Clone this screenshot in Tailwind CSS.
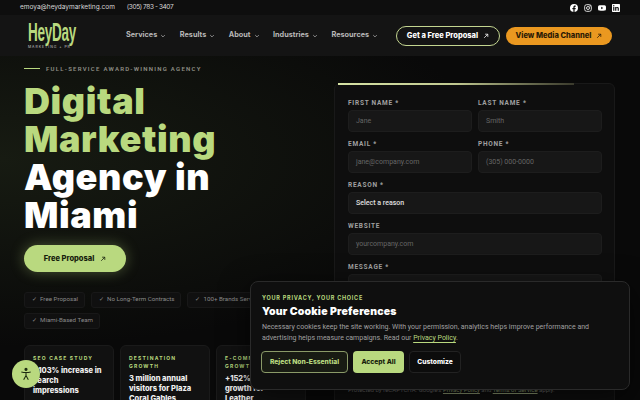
<!doctype html>
<html><head><meta charset="utf-8"><script src="https://cdn.jsdelivr.net/npm/@tailwindcss/browser@4"></script></head>
<body class="w-[640px] h-[400px] overflow-hidden bg-[#0a0a0a] font-['Inter',sans-serif] relative">
<div class="h-[15px] bg-[#0e0e0e] flex items-center justify-between pl-[20px] pr-[20px] pt-[1px] text-[6.500px] text-[#d8d8d8]">
 <div class="flex gap-[12px]"><span>emoya@heydaymarketing.com</span><span class="tracking-[-.4px]">(305) 783 - 3407</span></div>
 <div class="flex items-center gap-[6px] text-white">
  <svg class="w-[8px] h-[8px]" viewBox="0 0 24 24" fill="currentColor"><path d="M24 12a12 12 0 1 0-13.900 11.900v-8.400H7.100V12h3V9.400c0-3 1.800-4.700 4.500-4.700 1.300 0 2.700.2 2.700.2v3h-1.500c-1.500 0-2 .9-2 1.900V12h3.400l-.5 3.500h-2.900v8.400A12 12 0 0 0 24 12z"/></svg>
  <svg class="w-[8px] h-[8px]" viewBox="0 0 24 24" fill="none" stroke="currentColor" stroke-width="2.500"><rect x="2" y="2" width="20" height="20" rx="6"/><circle cx="12" cy="12" r="4.500"/><circle cx="18" cy="6" r=".8" fill="currentColor"/></svg>
  <svg class="w-[8px] h-[8px]" viewBox="0 0 24 24" fill="currentColor"><path d="M23.500 6.500a3 3 0 0 0-2.100-2.100C19.500 3.900 12 3.900 12 3.900s-7.500 0-9.400.5A3 3 0 0 0 .5 6.500C0 8.400 0 12 0 12s0 3.600.5 5.500a3 3 0 0 0 2.100 2.100c1.900.5 9.400.5 9.400.5s7.500 0 9.400-.5a3 3 0 0 0 2.100-2.100c.5-1.900.5-5.500.5-5.500s0-3.600-.5-5.500zM9.600 15.500v-7l6.300 3.500z"/></svg>
  <svg class="w-[8px] h-[8px]" viewBox="0 0 24 24" fill="currentColor"><path d="M22 0H2C.9 0 0 .9 0 2v20c0 1.100.9 2 2 2h20c1.100 0 2-.9 2-2V2c0-1.100-.9-2-2-2zM7.100 20.500H3.600V9h3.500zM5.300 7.400a2 2 0 1 1 0-4.100 2 2 0 0 1 0 4.100zm15.200 13.100H17v-5.600c0-1.300 0-3-1.900-3s-2.100 1.400-2.100 2.900v5.700H9.500V9h3.400v1.600c.5-.9 1.600-1.900 3.400-1.900 3.600 0 4.200 2.400 4.200 5.500z"/></svg>
 </div>
</div>
<nav class="h-[41px] bg-[#141414] flex items-center pl-[28px]">
 <div class="w-[98px] flex flex-col shrink-0 text-[#b9d97f]">
  <span class="font-['Liberation_Sans'] font-bold text-[25px] leading-[22px] h-[22px] origin-left scale-x-[.54] tracking-[-.5px] whitespace-nowrap">HeyDay</span>
  <span class="text-[3.500px] leading-[5px] tracking-[.95px] text-[#c8c8c8] whitespace-nowrap mt-[2px]">MARKETING + PR</span>
 </div>
 <div class="flex items-center gap-[13.500px] text-[7.300px] font-bold text-[#b8b8b8] whitespace-nowrap">
  <span class="flex items-center gap-[3px]">Services <svg class="w-[6px] h-[6px]" viewBox="0 0 10 10" fill="none" stroke="currentColor" stroke-width="1.200"><path d="M2 3.500 5 6.500 8 3.500"/></svg></span>
  <span class="flex items-center gap-[3px]">Results <svg class="w-[6px] h-[6px]" viewBox="0 0 10 10" fill="none" stroke="currentColor" stroke-width="1.200"><path d="M2 3.500 5 6.500 8 3.500"/></svg></span>
  <span class="flex items-center gap-[3px]">About <svg class="w-[6px] h-[6px]" viewBox="0 0 10 10" fill="none" stroke="currentColor" stroke-width="1.200"><path d="M2 3.500 5 6.500 8 3.500"/></svg></span>
  <span class="flex items-center gap-[3px]">Industries <svg class="w-[6px] h-[6px]" viewBox="0 0 10 10" fill="none" stroke="currentColor" stroke-width="1.200"><path d="M2 3.500 5 6.500 8 3.500"/></svg></span>
  <span class="flex items-center gap-[3px]">Resources <svg class="w-[6px] h-[6px]" viewBox="0 0 10 10" fill="none" stroke="currentColor" stroke-width="1.200"><path d="M2 3.500 5 6.500 8 3.500"/></svg></span>
 </div>
 <div class="ml-auto mr-[28px] flex items-center gap-[6px] text-[7.500px] font-extrabold whitespace-nowrap">
  <span class="h-[20px] w-[104px] rounded-full border border-[#c3d590] text-white flex items-center justify-center gap-[5px]">Get a Free Proposal <svg class="w-[6px] h-[6px]" viewBox="0 0 10 10" fill="none" stroke="currentColor" stroke-width="1.300"><path d="M2 8 8 2M3.500 2H8V6.500"/></svg></span>
  <span class="h-[18px] w-[106px] rounded-full bg-[#ea9820] text-[#2a1a05] flex items-center justify-center gap-[5px]">View Media Channel <svg class="w-[6px] h-[6px]" viewBox="0 0 10 10" fill="none" stroke="currentColor" stroke-width="1.300"><path d="M2 8 8 2M3.500 2H8V6.500"/></svg></span>
 </div>
</nav>
<main class="flex pl-[24px] h-[344px] overflow-hidden bg-[radial-gradient(ellipse_at_0%_30%,#171b12_0%,#090909_55%)]">
 <div class="w-[310px] shrink-0 pt-[7px]">
  <div class="flex items-center gap-[6px] text-[6px] font-['Roboto'] font-semibold tracking-[1.250px] text-[#8f8f86] h-[10px] whitespace-nowrap"><span class="w-[16px] h-px bg-[#b9d97f]"></span>FULL-SERVICE AWARD-WINNING AGENCY</div>
  <h1 class="mt-[9px] text-[36px] leading-[38px] font-black tracking-[.6px]"><span class="text-[#b9d97f]">Digital<br>Marketing</span><br><span class="text-white">Agency in<br>Miami</span></h1>
  <div class="mt-[11px] w-[102px] h-[27px] rounded-full bg-[#b9d97f] text-[#16200c] text-[7.500px] font-extrabold flex items-center justify-center gap-[6px] shadow-[0_0_14px_rgba(185,217,127,.35)]">Free Proposal <svg class="w-[6px] h-[6px]" viewBox="0 0 10 10" fill="none" stroke="currentColor" stroke-width="1.300"><path d="M2 8 8 2M3.500 2H8V6.500"/></svg></div>
  <div class="mt-[20px] flex flex-wrap gap-x-[6px] gap-y-[5px] text-[6.200px] font-['Roboto'] text-[#8a8a8a] w-[300px]">
   <span class="h-[16px] pl-[7px] pr-[6px] flex items-center gap-[3px] rounded-[3px] bg-[#101010] border border-[#181818]">✓ <span>Free Proposal</span></span>
   <span class="h-[16px] pl-[7px] pr-[6px] flex items-center gap-[3px] rounded-[3px] bg-[#101010] border border-[#181818]">✓ <span>No Long-Term Contracts</span></span>
   <span class="h-[16px] pl-[7px] pr-[6px] flex items-center gap-[3px] rounded-[3px] bg-[#101010] border border-[#181818]">✓ <span>100+ Brands Served</span></span>
   <span class="h-[16px] pl-[7px] pr-[6px] flex items-center gap-[3px] rounded-[3px] bg-[#101010] border border-[#181818]">✓ <span>Miami-Based Team</span></span>
  </div>
  <div class="mt-[16px] flex gap-[6px]">
   <div class="w-[90px] h-[80px] shrink-0 rounded-[6px] bg-[#111111] border border-[#1a1a1a] pt-[9px] pl-[8px] pr-[8px]">
    <div class="text-[5px] font-bold tracking-[1.200px] text-[#b9d97f] leading-[7.700px]">SEO CASE STUDY</div>
    <div class="mt-[3.500px] text-[7.500px] font-extrabold text-[#efefef] leading-[10px]">+103% increase in search impressions</div>
   </div>
   <div class="w-[90px] h-[80px] shrink-0 rounded-[6px] bg-[#111111] border border-[#1a1a1a] pt-[9px] pl-[8px] pr-[8px]">
    <div class="text-[5px] font-bold tracking-[1.200px] text-[#b9d97f] leading-[7.700px] w-[60px]">DESTINATION GROWTH</div>
    <div class="mt-[3.500px] text-[7.500px] font-extrabold text-[#efefef] leading-[10px]">3 million annual visitors for Plaza Coral Gables</div>
   </div>
   <div class="w-[90px] h-[80px] shrink-0 rounded-[6px] bg-[#111111] border border-[#1a1a1a] pt-[9px] pl-[8px] pr-[8px]">
    <div class="text-[5px] font-bold tracking-[1.200px] text-[#b9d97f] leading-[7.700px] w-[60px]">E-COMMERCE GROWTH</div>
    <div class="mt-[3.500px] text-[7.500px] font-extrabold text-[#efefef] leading-[10px]">+152%<br>growth for<br>Leather</div>
   </div>
  </div>
 </div>
 <div class="w-[281px] h-[330px] mt-[27px] relative rounded-[6px] bg-[#0e0e0e] border border-[#191919] pl-[13px] pr-[12px] pt-[15px] text-[6.500px] font-['Roboto'] font-bold tracking-[.75px] text-[#a0a0a0]">
  <div class="absolute left-[3px] right-[40px] -top-px h-[1.500px] bg-gradient-to-r from-[#d6e2a4] via-[#c0c890] to-[#3a3a2c]"></div>
  <div class="grid grid-cols-2 gap-x-[6px]">
   <div><div class="h-[8px] leading-[8px]">FIRST NAME *</div><div class="mt-[3px] h-[22px] rounded-[4px] bg-[#171717] border border-[#1d1d1d] flex items-center pl-[7px] text-[7px] font-normal tracking-normal text-[#666]">Jane</div></div>
   <div><div class="h-[8px] leading-[8px]">LAST NAME *</div><div class="mt-[3px] h-[22px] rounded-[4px] bg-[#171717] border border-[#1d1d1d] flex items-center pl-[7px] text-[7px] font-normal tracking-normal text-[#666]">Smith</div></div>
   <div class="mt-[8px]"><div class="h-[8px] leading-[8px]">EMAIL *</div><div class="mt-[3px] h-[22px] rounded-[4px] bg-[#171717] border border-[#1d1d1d] flex items-center pl-[7px] text-[7px] font-normal tracking-normal text-[#666]">jane@company.com</div></div>
   <div class="mt-[8px]"><div class="h-[8px] leading-[8px]">PHONE *</div><div class="mt-[3px] h-[22px] rounded-[4px] bg-[#171717] border border-[#1d1d1d] flex items-center pl-[7px] text-[7px] font-normal tracking-normal text-[#666]">(305) 000-0000</div></div>
  </div>
  <div class="mt-[8px] h-[8px] leading-[8px]">REASON *</div><div class="mt-[3px] h-[22px] rounded-[4px] bg-[#171717] border border-[#1d1d1d] flex items-center pl-[7px] text-[7px] font-medium tracking-normal text-[#e0e0e0]">Select a reason</div>
  <div class="mt-[8px] h-[8px] leading-[8px]">WEBSITE</div><div class="mt-[3px] h-[22px] rounded-[4px] bg-[#171717] border border-[#1d1d1d] flex items-center pl-[7px] text-[7px] font-normal tracking-normal text-[#666]">yourcompany.com</div>
  <div class="mt-[8px] h-[8px] leading-[8px]">MESSAGE *</div><div class="mt-[3px] h-[60px] rounded-[4px] bg-[#171717] border border-[#1d1d1d]"></div>
  <div class="mt-[10px] h-[30px] rounded-[4px] bg-[#b9d97f]"></div>
  <p class="mt-[12px] text-[6px] leading-[8px] font-normal tracking-normal text-[#6a6a6a] whitespace-nowrap">Protected by reCAPTCHA. Google's <span class="text-[#8d9a72] underline">Privacy Policy</span> and <span class="text-[#8d9a72] underline">Terms of Service</span> apply.</p>
 </div>
</main>
<button class="absolute left-[12px] top-[360px] w-[28px] h-[28px] rounded-full bg-[#b9d97f] flex items-center justify-center text-[#1c2a10]">
 <svg class="w-[14px] h-[14px]" viewBox="0 0 24 24" fill="none" stroke="currentColor" stroke-width="1.800"><circle cx="12" cy="4" r="1.800" fill="currentColor"/><path d="M4 8.500c5 1.300 11 1.300 16 0M12 9.500v5M12 14.500 8 22M12 14.500 16 22"/></svg>
</button>
<section class="absolute left-[250px] top-[281px] w-[380px] h-[109px] rounded-[8px] bg-[#0f0f0f] border border-[#2a2a2a] pl-[11px] pt-[12px] shadow-[0_8px_30px_rgba(0,0,0,.6)]">
 <div class="text-[5.500px] font-bold tracking-[.75px] text-[#b9d97f] leading-[8px]">YOUR PRIVACY, YOUR CHOICE</div>
 <div class="mt-[2px] text-[10.500px] font-black text-white leading-[16px] tracking-[.2px]">Your Cookie Preferences</div>
 <p class="mt-[2px] font-['Roboto'] text-[7px] text-[#a0a0a0] leading-[10.700px] w-[350px]">Necessary cookies keep the site working. With your permission, analytics helps improve performance and advertising helps measure campaigns. Read our <span class="text-[#b9d97f] underline underline-offset-2">Privacy Policy</span>.</p>
 <div class="mt-[8px] -ml-[1px] flex gap-[5px] text-[6.700px] font-extrabold whitespace-nowrap">
  <span class="w-[87px] h-[22px] rounded-[4px] bg-[#181b13] border border-[#8a9a68] text-[#b9d97f] flex items-center justify-center">Reject Non-Essential</span>
  <span class="w-[51px] h-[22px] rounded-[4px] bg-[#b9d97f] text-[#16200c] flex items-center justify-center">Accept All</span>
  <span class="w-[52px] h-[22px] rounded-[4px] bg-[#0c0c0c] border border-[#222] text-white flex items-center justify-center">Customize</span>
 </div>
</section>
</body></html>
